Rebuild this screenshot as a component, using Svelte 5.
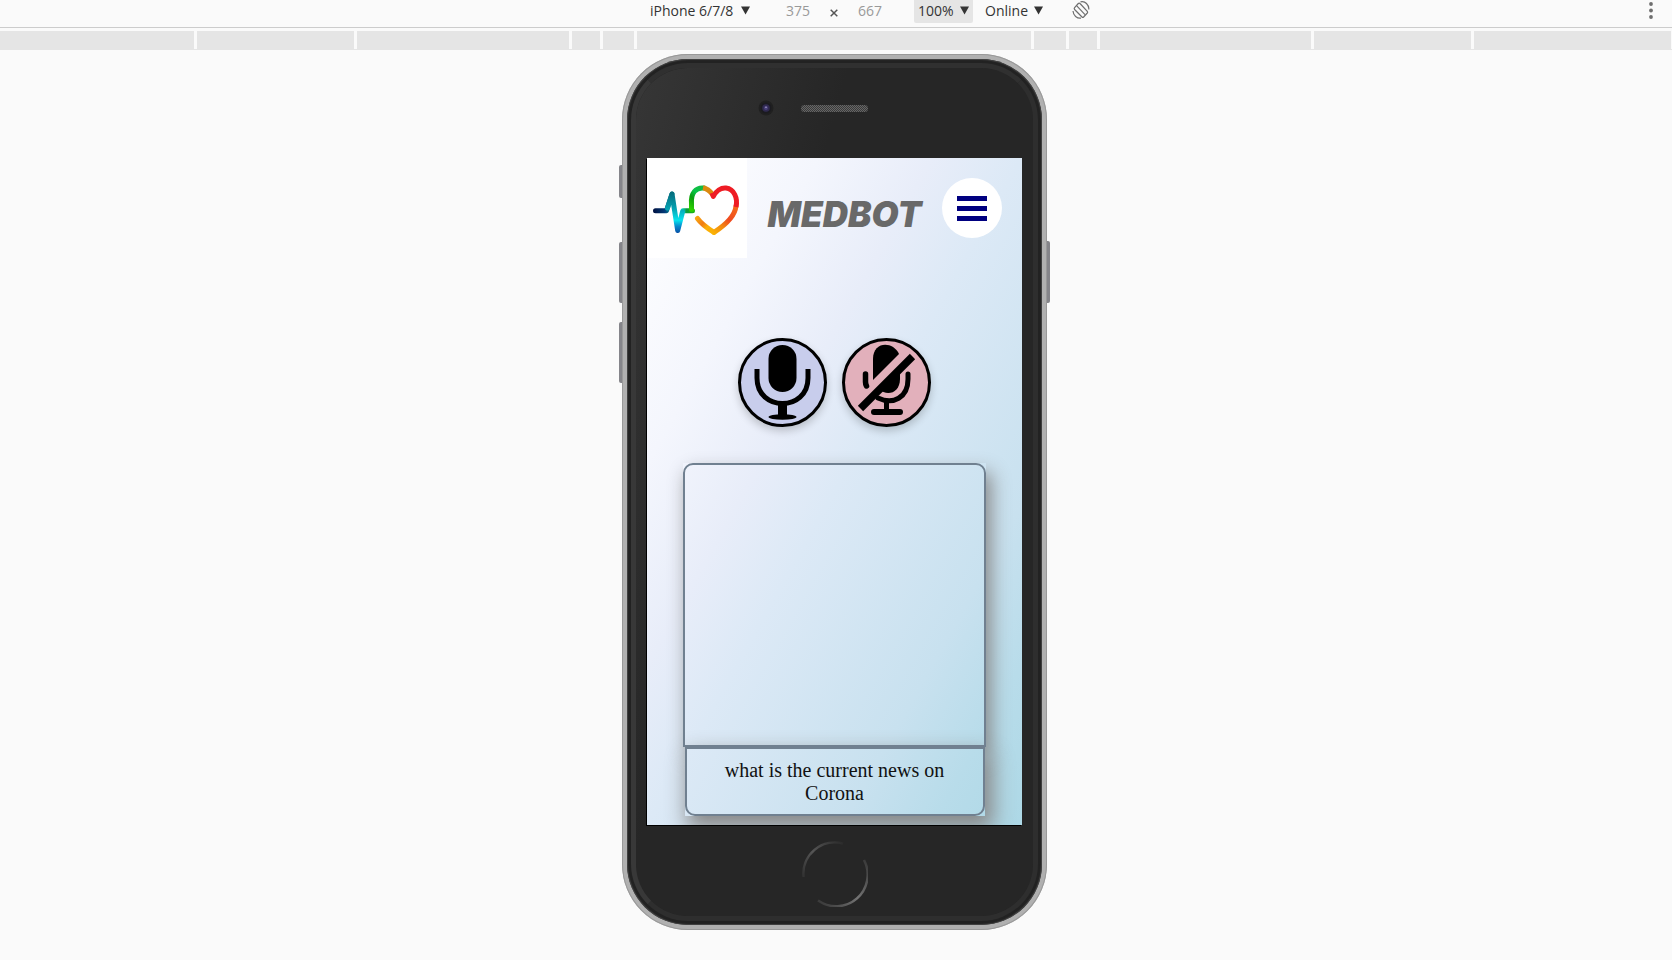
<script>
  const devices = ['iPhone 6/7/8'];
  const zooms = ['100%'];
  const networks = ['Online'];
  const breakpoints = [157, 212, 28, 31, 394, 32, 28, 211, 157];
  let width = $state('375');
  let height = $state('667');
  const message = 'what is the current news on Corona';
</script>

<header class="toolbar">
  <div class="tools">
    <label class="pick device">
      <select aria-label="Device">
        {#each devices as d}<option>{d}</option>{/each}
      </select>
      <svg viewBox="0 0 9 9"><path d="M0 0.500h9L4.500 8.500z" /></svg>
    </label>
    <div class="size">
      <input aria-label="Width" bind:value={width} />
      <svg class="times" viewBox="0 0 8 8"><path d="M.7.7l6.600 6.600M7.300.7L.7 7.300" /></svg>
      <input aria-label="Height" bind:value={height} />
    </div>
    <label class="pick zoom">
      <select aria-label="Zoom">
        {#each zooms as z}<option>{z}</option>{/each}
      </select>
      <svg viewBox="0 0 9 9"><path d="M0 0.500h9L4.500 8.500z" /></svg>
    </label>
    <label class="pick network">
      <select aria-label="Throttling">
        {#each networks as n}<option>{n}</option>{/each}
      </select>
      <svg viewBox="0 0 9 9"><path d="M0 0.500h9L4.500 8.500z" /></svg>
    </label>
    <button class="icon" aria-label="Rotate">
      <svg viewBox="0 0 18 18" width="18" height="18">
        <g fill="none" stroke="#6e6e6e" stroke-width="1.200">
          <path d="M2.600 6.700L6.300 2.500Q7.200 1.600 8 2.500L15.300 10.300Q16 11.200 15.300 12L11.600 16Q10.800 16.800 10 16L2.600 8.500Q1.800 7.600 2.600 6.700z" />
          <path d="M4.800 4.800L13 13.700" />
          <path d="M8.500.9C11.500.2 13.500 1.500 14.500 2.500C16.500 4.500 17 6.500 16.800 8.500" />
          <path d="M1 10C1.200 12.500 2.500 14.500 3.600 15.500C5.500 17 7.500 17.400 9 17.100" />
        </g>
      </svg>
    </button>
  </div>
  <button class="icon more" aria-label="More options">
    <svg viewBox="0 0 4 18" width="4" height="18">
      <g fill="#6e6e6e"><circle cx="2" cy="3" r="1.900" /><circle cx="2" cy="9.500" r="1.900" /><circle cx="2" cy="16" r="1.900" /></g>
    </svg>
  </button>
</header>

<div class="ruler">
  <span class="edge"></span>
  {#each breakpoints as b}<span style="width: {b}px"></span>{/each}
  <span class="edge last"></span>
</div>

<main>
  <div class="phone">
    <i class="key mute"></i><i class="key up"></i><i class="key down"></i><i class="key power"></i>
    <div class="body">
      <div class="glass">
        <div class="top">
          <svg class="camera" viewBox="0 0 16 16">
            <circle cx="8" cy="8" r="7.500" fill="#202020" />
            <circle cx="8" cy="8" r="5.500" fill="#1b1b20" />
            <circle cx="8" cy="8" r="3.800" fill="#302a50" />
            <circle cx="8" cy="8" r="2" fill="#49407a" />
            <circle cx="8" cy="7.200" r=".8" fill="#a9a0c8" />
          </svg>
          <div class="speaker"></div>
        </div>

        <div class="screen">
          <div class="nav">
            <div class="logo">
              <svg viewBox="0 0 100 100" role="img" aria-label="Heartbeat">
                <defs>
                  <linearGradient id="pulse" gradientUnits="userSpaceOnUse" x1="6" y1="0" x2="48" y2="0">
                    <stop offset="0" stop-color="#001040" /><stop offset=".28" stop-color="#023a78" />
                    <stop offset=".42" stop-color="#078890" /><stop offset=".6" stop-color="#06c8dc" />
                    <stop offset=".7" stop-color="#08d4b0" /><stop offset=".8" stop-color="#0a9a40" />
                    <stop offset="1" stop-color="#22b80c" />
                  </linearGradient>
                  <linearGradient id="depth" gradientUnits="userSpaceOnUse" x1="0" y1="33" x2="0" y2="76">
                    <stop offset="0" stop-color="#056878" /><stop offset=".4" stop-color="#05a0b0" />
                    <stop offset=".68" stop-color="#06e4ee" /><stop offset=".82" stop-color="#0788cc" />
                    <stop offset="1" stop-color="#0848a0" />
                  </linearGradient>
                  <linearGradient id="lobe" gradientUnits="userSpaceOnUse" x1="43" y1="50" x2="60" y2="29">
                    <stop offset="0" stop-color="#2cd000" /><stop offset=".35" stop-color="#0a9c10" />
                    <stop offset=".6" stop-color="#08c448" /><stop offset="1" stop-color="#18b440" />
                  </linearGradient>
                  <linearGradient id="flame" gradientUnits="userSpaceOnUse" x1="90" y1="46" x2="66" y2="76">
                    <stop offset="0" stop-color="#f57018" /><stop offset=".45" stop-color="#ef4a20" />
                    <stop offset=".7" stop-color="#f28a10" /><stop offset="1" stop-color="#fbb404" />
                  </linearGradient>
                  <linearGradient id="amber" gradientUnits="userSpaceOnUse" x1="50" y1="60" x2="67" y2="75">
                    <stop offset="0" stop-color="#f8a410" /><stop offset=".35" stop-color="#f07c14" />
                    <stop offset=".6" stop-color="#fbb008" /><stop offset="1" stop-color="#f8b004" />
                  </linearGradient>
                </defs>
                <g fill="none" stroke-width="5" stroke-linecap="round" stroke-linejoin="round">
                  <path stroke="url(#pulse)" d="M8.500 52.700H19.500L25 36M36 52.700H45.500" />
                  <path stroke="url(#depth)" d="M20.500 50L25 36L30.700 72.500L35.500 54" />
                  <path stroke="url(#lobe)" d="M44.500 51.500V46C43.500 35 49 29 57 30" />
                  <path stroke="#dc8a10" stroke-linecap="butt" d="M56 29.800C60 30.500 63 33 66 37" />
                  <path stroke="url(#amber)" d="M50.500 60.500C54 65.500 60 70 67 74.300" />
                  <path stroke="url(#flame)" d="M67 74.300C80 66 88 58 89 48" />
                  <path stroke="#ee1c24" stroke-linecap="butt" d="M65 35L66.300 38.500C69 33 74 29.500 79 30C87 31 91 40 89 49" />
                </g>
              </svg>
            </div>
            <h1>MEDBOT</h1>
            <button class="menu" aria-label="Menu"><i></i><i></i><i></i></button>
          </div>

          <div class="mics">
            <button class="mic on" aria-label="Start listening">
              <svg viewBox="0 0 83 83">
                <rect x="27.500" y="4" width="28" height="47" rx="14" />
                <path d="M16 28V37C16 71 67 71 67 37V28" fill="none" stroke="#000" stroke-width="5" />
                <path d="M37 60h9v14h-9z" /><ellipse cx="41.500" cy="76" rx="14" ry="2.800" />
              </svg>
            </button>
            <button class="mic off" aria-label="Stop listening">
              <svg viewBox="0 0 83 83">
                <path d="M28 39V18C28 0 48 0 54 13z" />
                <path d="M34 48L55 27V38C55 52 42 56 34 48z" />
                <path d="M20.500 33V41C20.500 43 21 44 21.500 45" fill="none" stroke="#000" stroke-width="5.500" stroke-linecap="round" />
                <path d="M63 33V38C63 57 48 64 33 57" fill="none" stroke="#000" stroke-width="5" stroke-linecap="round" />
                <path d="M15.500 67.500L67.500 15.500" stroke="#000" stroke-width="7.500" />
                <path d="M39 59h5v10h-5z" /><rect x="26" y="68" width="32" height="6" rx="3" />
              </svg>
            </button>
          </div>

          <section class="chat">
            <div class="reply"><div></div></div>
            <div class="query"><p>{message}</p></div>
          </section>
        </div>

        <button class="home" aria-label="Home">
          <svg viewBox="0 0 66 66">
            <defs>
              <linearGradient id="arcA" gradientUnits="userSpaceOnUse" x1="0" y1="36" x2="42" y2="0">
                <stop offset="0" stop-color="#303030" /><stop offset=".45" stop-color="#555" /><stop offset="1" stop-color="#282828" />
              </linearGradient>
              <linearGradient id="arcB" gradientUnits="userSpaceOnUse" x1="64" y1="18" x2="16" y2="62">
                <stop offset="0" stop-color="#383838" /><stop offset=".5" stop-color="#747474" /><stop offset="1" stop-color="#383838" />
              </linearGradient>
            </defs>
            <path d="M1.500 36A31.500 31.500 0 0 1 41 2.500" fill="none" stroke="url(#arcA)" stroke-width="2.500" />
            <path d="M62 19A31.500 31.500 0 0 1 16 59.500" fill="none" stroke="url(#arcB)" stroke-width="2.500" />
          </svg>
        </button>
      </div>
    </div>
  </div>
</main>

<style>
  :global(body) { margin: 0; background: #fafafa; }
  button { border: 0; padding: 0; background: none; cursor: pointer; }
  svg { display: block; }

  .toolbar {
    display: grid;
    grid-template-columns: 1fr auto 1fr;
    height: 27px;
    padding-right: 3px;
    border-bottom: 1px solid #ccc;
    font-family: "Open Sans", sans-serif;
    font-size: 14px;
    color: #333;
  }
  .tools { grid-column: 2; display: flex; align-items: flex-start; padding-left: 67px; }
  .pick { display: flex; align-items: center; gap: 4px; height: 23px; padding: 0 4px; box-sizing: border-box; border-radius: 0 0 2px 2px; }
  .pick select, .size input {
    appearance: none;
    border: 0;
    padding: 0 0 2px;
    margin: 0;
    background: none;
    font: inherit;
    line-height: 20px;
    color: inherit;
    outline: 0;
  }
  .pick select { flex: 1; min-width: 0; }
  .pick svg { width: 9px; height: 9px; fill: #333; margin-bottom: 3px; }
  .device { width: 108px; }
  .zoom { width: 59px; background: #e5e5e5; }
  .network { width: 66px; margin-left: 8px; }
  .size { display: flex; align-items: center; height: 23px; margin: 0 32px; gap: 20px; }
  .size input { width: 24px; color: #999; }
  .times { width: 8px; height: 8px; margin-top: 3px; fill: none; stroke: #555; stroke-width: 1.500; }
  .icon { margin-top: 1px; height: 18px; }
  .tools .icon { margin-left: 25px; }
  .more { justify-self: end; margin-right: 16px; }

  .ruler { display: flex; gap: 3px; height: 18px; margin-top: 3px; padding-right: 1px; border-bottom: 1px solid #e5e5e5; }
  .ruler span { flex: none; background: #e5e5e5; }
  .ruler .edge { flex: 1 1 0; }
  .ruler .last { flex-basis: 3px; }

  main { display: flex; justify-content: center; padding: 4px 3px 29px 0; }
  .phone { position: relative; box-sizing: border-box; width: 425px; padding: 5px; border-radius: 66px; background: #b0b0b0; box-shadow: inset 0 0 0 1px #999; }
  .body { padding: 4px; border-radius: 61px; background: #222; box-shadow: inset 0 0 1px 1px #444; }
  .glass {
    display: flex;
    flex-direction: column;
    align-items: center;
    padding: 0 0 9px;
    border: 5px solid #2e2e2e;
    border-top-color: #303030;
    border-left-color: #383838;
    border-radius: 57px;
    background: linear-gradient(105deg, #363636 0, #262626 34%);
    background-clip: padding-box;
  }
  .key { position: absolute; left: -3px; width: 3px; border-radius: 2px 0 0 2px; background: #85858a; }
  .mute { top: 111px; height: 33px; }
  .up { top: 188px; height: 61px; }
  .down { top: 268px; height: 61px; }
  .power { left: auto; right: -3px; top: 187px; height: 62px; border-radius: 0 2px 2px 0; }

  .top { display: flex; align-items: center; gap: 27px; height: 90px; align-self: stretch; padding: 0 0 10px 122px; box-sizing: border-box; }
  .camera { width: 16px; height: 16px; }
  .speaker { width: 67px; height: 7px; border-radius: 4px; background: repeating-conic-gradient(#666 0 25%, #3a3a3a 0 50%) 0 0 / 2px 2px; }

  .screen {
    width: 375px;
    height: 667px;
    overflow: hidden;
    background: linear-gradient(to bottom right, #fff 0, #f4f6fd 23%, #e8edf9 38%, #dce9f6 50%, #c8e1ef 76%, #b8dcea 88%, #add8e6 100%);
    box-shadow: -1px 1px 0 #000;
  }
  .nav { display: flex; align-items: flex-start; height: 100px; }
  .logo { width: 100px; height: 100px; background: #fff; }
  h1 { flex: 1; margin: 35px 0 0; font: italic 900 35px/42px Inter, sans-serif; color: #696969; text-align: center; }
  .menu { display: flex; flex-direction: column; align-items: center; justify-content: center; gap: 5px; width: 60px; height: 60px; margin: 20px 20px 0 0; border-radius: 50%; background: #fff; }
  .menu i { width: 30px; height: 5px; background: navy; }

  .mics { display: flex; justify-content: center; gap: 15px; margin-top: 80px; }
  .mic { box-sizing: border-box; width: 89px; height: 89px; border: 3px solid #000; border-radius: 50%; box-shadow: 0 4px 8px rgba(0, 0, 0, .2); }
  .on { background: #c8cdec; }
  .off { background: #e2b0bb; }

  .chat { display: flex; flex-direction: column; align-items: center; margin-top: 36px; }
  .reply {
    width: 303px;
    box-shadow: 5px 10px 18px #888;
    clip-path: polygon(-30px -30px, 333px -30px, 333px 333px, 302px 333px, 302px 100%, 2px 100%, 2px 333px, -30px 333px);
  }
  .reply div { height: 280px; border: 2px solid #708090; border-radius: 10px 10px 0 0; }
  .query { width: 300px; box-shadow: 5px 10px 20px 3px #888; }
  .query p {
    margin: 0;
    padding: 10px 30px 9px;
    border: 2px solid #708090;
    border-radius: 0 0 10px 10px;
    font: 20px/23px "Liberation Serif", "Times New Roman", serif;
    color: #111;
    text-align: center;
  }
  .home { width: 66px; height: 66px; margin-top: 16px; }
</style>
